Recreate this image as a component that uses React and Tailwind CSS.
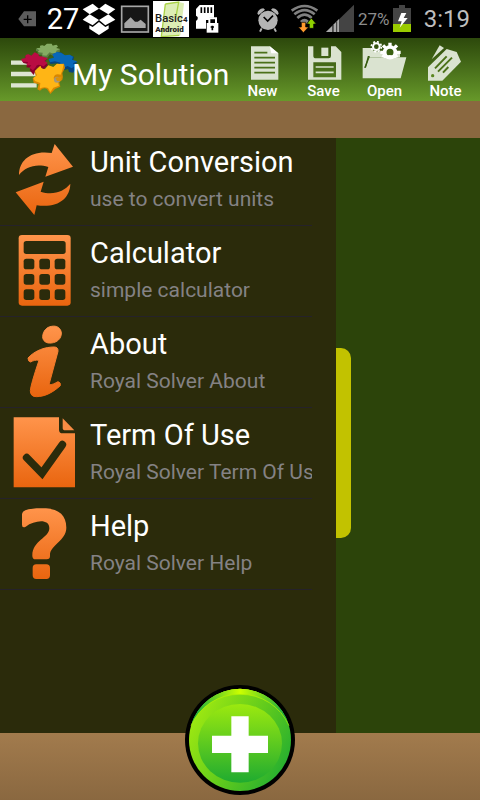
import React from "react";

function StatusBar() {
  return (
    <div className="flex h-[38px] items-center justify-between bg-black pl-[9px] pr-[10px]">
      <div className="flex items-center">
        <svg className="h-9 w-9" viewBox="27 3 108 108" aria-hidden="true">
          <path d="M72 34H108V79H72L55 57Z" fill="#5c5c5c" />
          <path d="M83 46V70M71 58H95" stroke="#000" strokeWidth="4" />
        </svg>
        <span className="w-9 text-center text-[29px] leading-9 text-white">27</span>
        <svg className="h-9 w-9" viewBox="243 3 108 108" aria-hidden="true" fill="#fff">
          <path d="M248 28L278 11L297 26L269 43Z" />
          <path d="M346 28L316 11L297 26L325 43Z" />
          <path d="M248 59L269 43L297 60L278 76Z" />
          <path d="M346 59L325 43L297 60L316 76Z" />
          <path d="M268 76L278 81L297 66L316 81L326 76V86L297 105L268 86Z" />
        </svg>
        <svg className="h-9 w-9" viewBox="351 3 108 108" aria-hidden="true">
          <rect x="365" y="19" width="80" height="77" fill="#161616" stroke="#a6a6a6" strokeWidth="5" />
          <path d="M373 84V70L392 52L405 65H413L422 59L437 72V84Z" fill="#a6a6a6" />
        </svg>
        <svg className="h-9 w-9" viewBox="459 3 108 108" aria-hidden="true">
          <rect x="459" y="3" width="108" height="108" fill="#fff" />
          <path d="M496 12L536 6L552 10L541 106L484 110Z" fill="#dcedb4" />
          <path d="M496 12L536 6L528 50M496 12L484 110L538 106" fill="none" stroke="#a9d245" strokeWidth="4" />
          <text x="465" y="66" fontFamily="Roboto, sans-serif" fontSize="34" fontWeight="500" fill="#1c1c1c">
            Basic
            <tspan fontSize="24" fontWeight="700">4</tspan>
          </text>
          <text x="466" y="96" fontFamily="Roboto, sans-serif" fontSize="24" fontWeight="900" fill="#1c1c1c">
            Android
          </text>
        </svg>
        <svg className="h-9 w-9" viewBox="567 3 108 108" aria-hidden="true">
          <path d="M599 15H642V53H628V60H618V86H588V63L593 58V51L588 47V27Z" fill="#fff" />
          <path d="M604 22V39M614 22V39M624 22V39M634 22V39" stroke="#000" strokeWidth="5" />
          <path d="M628 70V55H648V70" fill="none" stroke="#fff" strokeWidth="6" />
          <rect x="620" y="69" width="35" height="29" fill="#fff" />
          <path d="M637 77V91M632 81H642" stroke="#000" strokeWidth="5" />
        </svg>
      </div>
      <div className="flex items-center">
        <svg className="h-9 w-9" viewBox="30 3 108 108" aria-hidden="true">
          <circle cx="84" cy="61" r="29" fill="#b4b4b4" />
          <path d="M52 41Q54 27 70 25L75 29L56 45ZM116 41Q114 27 98 25L93 29L112 45Z" fill="#b4b4b4" />
          <path d="M65 85L60 95M103 85L108 95" stroke="#b4b4b4" strokeWidth="6" />
          <path d="M71 51L83 63L99 47" fill="none" stroke="#000" strokeWidth="5" />
        </svg>
        <svg className="h-9 w-9" viewBox="138 3 108 108" aria-hidden="true">
          <g fill="none" stroke="#808080" strokeWidth="8">
            <path d="M155 32Q194 4 232 32" />
            <path d="M163 43Q194 18 224 43" />
            <path d="M172 54Q194 34 215 54" />
          </g>
          <path d="M180 63Q194 49 207 63L194 77Z" fill="#808080" />
          <path d="M184 67H197V81H206L190 98L175 81H184Z" fill="#ff9a2e" stroke="#000" strokeWidth="2" />
          <path d="M208 85V72H200L214 54L229 72H221V85Z" fill="#8fd000" stroke="#000" strokeWidth="2" />
        </svg>
        <svg className="h-9 w-9" viewBox="246 3 108 108" aria-hidden="true">
          <path d="M258 96L342 14V96Z" fill="#444" />
          <path d="M258 96L277 77V96ZM280 96V74L297 57V96Z" fill="#a8a8a8" />
          <path d="M279 96V75M290 96V64" stroke="#333" strokeWidth="3" />
        </svg>
        <span className="w-[30px] text-center text-[17px] leading-9 text-[#8c8c8c]">27%</span>
        <svg className="h-9 w-7" viewBox="444 3 84 108" aria-hidden="true">
          <path d="M459 24H477V15H495V24H513V96H459Z" fill="#444" />
          <rect x="459" y="72" width="54" height="24" fill="#9acb00" />
          <path d="M484 39H499L491 54H503L479 83L485 64H474Z" fill="#fff" />
        </svg>
        <span className="w-[54px] text-right text-[24px] leading-9 text-[#bebebe]">3:19</span>
      </div>
    </div>
  );
}

const NewIcon = () => (
  <svg className="h-10 w-[46px]" viewBox="-2 123 138 120" aria-hidden="true">
    <path d="M31 139H88L113 160V239H31Z" fill="#dae3d0" />
    <path d="M87 139L113 160H92Z" fill="#fff" />
    <path d="M41 158H80M41 173H103M41 188H103M41 203H103M41 218H103" stroke="#4b7119" strokeWidth="5" />
  </svg>
);

const SaveIcon = () => (
  <svg className="h-10 w-[46px]" viewBox="181 123 138 120" aria-hidden="true">
    <path
      fillRule="evenodd"
      d="M202 139H218V168Q218 175 226 175H264Q271 175 271 168V139H285L302 156V239H202ZM218 187V232H286V187Z"
      fill="#dae3d0"
    />
    <rect x="242" y="143" width="21" height="25" fill="#dae3d0" />
    <path d="M225 201H279M225 217H279" stroke="#dae3d0" strokeWidth="5" />
  </svg>
);

const OpenIcon = () => (
  <svg className="h-10 w-[46px]" viewBox="364 123 138 120" aria-hidden="true">
    <path d="M366 235V144H390L400 153L478 158V171H384L370 203H375L387 172H497L480 235Z" fill="#dae3d0" />
    <path d="M387 170H383L374 203" fill="none" stroke="#355a10" strokeWidth="4" />
    <circle cx="407" cy="140" r="10" fill="none" stroke="#fff" strokeWidth="6" />
    <circle cx="407" cy="140" r="15" fill="none" stroke="#fff" strokeWidth="5" strokeDasharray="6 5.8" />
    <path d="M422 172A26 26 0 0 1 473 172Z" fill="#fff" />
    <circle cx="448" cy="157" r="16" fill="#3a6012" stroke="#fff" strokeWidth="11" />
    <path d="M426 174Q447 156 470 174Z" fill="#fff" />
    <path
      d="M448 138V128M434 143L427 136M462 143L469 136M429 157H419M467 157H480"
      stroke="#fff"
      strokeWidth="10"
    />
  </svg>
);

const NoteIcon = () => (
  <svg className="h-10 w-[46px]" viewBox="547 123 138 120" aria-hidden="true">
    <path d="M573 178L597 136L610 144Z" fill="#dae3d0" />
    <path d="M562 202L618 147L648 156L661 185L605 242H562Z" fill="#dae3d0" />
    <path d="M583 205L618 169M592 215L634 173M607 218L623 201" stroke="#4b7119" strokeWidth="6" />
    <circle cx="576" cy="227" r="5" fill="#5a8720" />
  </svg>
);

function Logo() {
  return (
    <svg className="h-[63px] w-[70px] shrink-0" viewBox="30 114 210 189" aria-hidden="true">
      <path d="M33 188H110M33 222H110M33 256H110" stroke="#dde5d2" strokeWidth="13" />
      <path
        d="M108 146L121 144Q117 137 127 137L133 138L141 132H155L158 138L169 135L174 140L168 145L180 148L179 156L168 158L172 165L158 167L150 163L142 173L127 172L125 164L110 164L117 156L108 153Z"
        fill="#5b7d42"
      />
      <path
        d="M109 145L121 143Q117 136 127 136L133 138L141 131H155L158 137L169 134L174 139L168 144L180 147L168 153L171 159L156 160L149 157L139 167L127 166L128 158L112 157L118 151Z"
        fill="#84ab62"
      />
      <path
        d="M64 179L77 175Q73 164 86 164L94 168L104 158L116 164Q114 171 124 170L141 176L134 187L144 194L132 207L121 203Q111 200 108 209L101 225L89 211L91 203L79 202L82 192L70 189Z"
        fill="#87002b"
      />
      <path
        d="M63 177L77 174Q73 163 86 163L94 167L104 157L116 163Q114 170 124 169L144 175L133 183L143 188L131 199L120 195Q109 192 107 202L99 211L88 203L94 196L79 196L84 186L68 185Z"
        fill="#b90c43"
      />
      <path
        d="M147 179L162 174L158 164L171 157L185 158L195 167L210 165L222 171L219 182L232 187L223 196L227 208L219 218L207 216L204 207L190 211L178 203L173 190L151 192Z"
        fill="#074480"
      />
      <path
        d="M146 177L162 173L157 163L171 156L183 158L195 166L209 164L219 170L216 179L232 184L219 190L224 198L215 205L203 198L190 203L177 196L182 188L165 184L150 187Z"
        fill="#0867b8"
      />
      <path
        d="M104 214L121 198Q125 211 136 207L145 197L160 202L171 192L192 191L195 204L187 219Q190 231 187 239L178 247L181 260L165 267L151 282L141 267Q131 261 120 272L112 268L116 253L101 248L98 235L107 229Z"
        fill="#d98700"
      />
      <path
        d="M105 213L121 197Q125 210 136 206L145 196L160 201L171 191L191 193L187 211L182 224Q164 219 161 233Q162 245 174 246L177 257L160 263L151 277L144 264Q130 258 119 266L121 249L105 243L100 234L111 226Z"
        fill="#ffb515"
      />
      <circle cx="171" cy="239" r="9" fill="#a4987d" />
      <path d="M166 233L185 230L181 243H171Z" fill="#de9207" />
    </svg>
  );
}

const actions = [
  { label: "New", Icon: NewIcon },
  { label: "Save", Icon: SaveIcon },
  { label: "Open", Icon: OpenIcon },
  { label: "Note", Icon: NoteIcon },
];

function Header() {
  return (
    <header className="flex h-[63px] bg-linear-to-b from-[#2d490c] to-[#67992a] pr-1">
      <button type="button" aria-label="Menu" className="ml-[10px] shrink-0">
        <Logo />
      </button>
      <h1 className="-ml-2 min-w-0 flex-1 pt-[5px] text-[30px] leading-[63px] whitespace-nowrap text-white">
        My Solution
      </h1>
      <nav className="flex shrink-0">
        {actions.map(({ label, Icon }) => (
          <button key={label} type="button" className="flex w-[61px] flex-col items-center pt-[3px] text-white">
            <Icon />
            <span className="text-[15px] leading-5 font-medium">{label}</span>
          </button>
        ))}
      </nav>
    </header>
  );
}

const OrangeFill = ({ id }) => (
  <defs>
    <linearGradient id={id} x1="0" y1="0" x2="0" y2="1">
      <stop offset="0" stopColor="#ff944b" />
      <stop offset="1" stopColor="#e9650f" />
    </linearGradient>
  </defs>
);

const ConvertIcon = () => (
  <svg className="size-[70px] shrink-0 overflow-visible" viewBox="30 21 210 210" aria-hidden="true">
    <defs>
      <linearGradient id="convert" gradientUnits="userSpaceOnUse" x1="0" y1="18" x2="0" y2="231">
        <stop offset="0" stopColor="#ff944b" />
        <stop offset="1" stopColor="#e9650f" />
      </linearGradient>
    </defs>
    <g fill="url(#convert)">
      <path d="M57 111C57 66 94 36 155 45L164 18L219 86L136 116L145 87C108 76 77 86 57 111Z" />
      <path d="M211 137C210 181 174 211 110 202L103 231L47 163L131 131L122 161C160 173 192 160 211 137Z" />
    </g>
  </svg>
);

const CalculatorIcon = () => (
  <svg className="size-[70px] shrink-0 overflow-visible" viewBox="30 294 210 210" aria-hidden="true">
    <OrangeFill id="calculator" />
    <rect x="56" y="291" width="156" height="212" rx="10" fill="url(#calculator)" />
    <g fill="#2b2b0b">
      <rect x="71" y="309" width="126" height="39" rx="8" />
      {[362, 408, 454].map((y) =>
        [71, 118, 164].map((x) => <rect key={`${x}-${y}`} x={x} y={y} width="32" height="32" rx="8" />)
      )}
    </g>
  </svg>
);

const InfoIcon = () => (
  <svg className="size-[70px] shrink-0 overflow-visible" viewBox="30 36 210 210" aria-hidden="true">
    <OrangeFill id="info" />
    <path
      fill="url(#info)"
      stroke="url(#info)"
      strokeWidth="3"
      d="M155 34C170 31 183 39 184 54C184 71 172 82 154 84C138 86 128 77 128 65C129 48 140 36 155 34ZM84 129C106 105 137 96 162 96Q175 96 174 109L147 209C155 211 166 204 174 200Q183 202 181 212C160 231 136 245 109 245Q91 245 91 227Q92 210 117 136C108 134 98 137 92 141Q84 140 84 129Z"
    />
  </svg>
);

const TermsIcon = () => (
  <svg className="size-[70px] shrink-0 overflow-visible" viewBox="30 309 210 210" aria-hidden="true">
    <OrangeFill id="terms" />
    <path d="M41 307H177V344Q177 355 188 355H225V517H41Z" fill="url(#terms)" />
    <path d="M188 310L223 346H196Q188 346 188 338Z" fill="#f88c44" />
    <path d="M80 428L126 475L187 389" fill="none" stroke="#2b2b0b" strokeWidth="23" strokeLinecap="round" />
  </svg>
);

const HelpIcon = () => (
  <svg className="size-[70px] shrink-0 overflow-visible" viewBox="30 57 210 210" aria-hidden="true">
    <OrangeFill id="help" />
    <path
      fill="url(#help)"
      d="M66 72Q67 65 76 61C92 54 118 54 138 55C178 58 199 77 199 113C199 152 150 165 150 195V198Q150 208 140 208H107Q97 208 97 197C97 151 148 144 148 115C148 85 104 91 77 110Q66 115 66 104ZM98 234Q98 223 109 223H139Q150 223 150 234V256Q150 267 139 267H109Q98 267 98 256Z"
    />
  </svg>
);

const entries = [
  { title: "Unit Conversion", detail: "use to convert units", Icon: ConvertIcon },
  { title: "Calculator", detail: "simple calculator", Icon: CalculatorIcon },
  { title: "About", detail: "Royal Solver About", Icon: InfoIcon },
  { title: "Term Of Use", detail: "Royal Solver Term Of Use", Icon: TermsIcon },
  { title: "Help", detail: "Royal Solver Help", Icon: HelpIcon },
];

function Drawer() {
  return (
    <aside className="w-[70%] bg-[#2b2b0b] pr-6">
      <ul>
        {entries.map(({ title, detail, Icon }) => (
          <li key={title} className="h-[91px] border-b border-[#25222a] first:h-[88px]">
            <button type="button" className="flex h-full w-full items-end gap-[10px] pb-[10px] pl-[10px] text-left">
              <Icon />
              <span className="block min-w-0 flex-1 overflow-hidden whitespace-nowrap">
                <span className="block text-[29px] leading-[42px] text-white">{title}</span>
                <span className="block text-[21px] leading-8 text-[#848284]">{detail}</span>
              </span>
            </button>
          </li>
        ))}
      </ul>
    </aside>
  );
}

function AddIcon() {
  return (
    <svg className="size-[110px]" viewBox="45 44 330 330" aria-hidden="true">
      <defs>
        <linearGradient id="rim" x1="0" y1="0.2" x2="1" y2="0.8">
          <stop offset="0" stopColor="#a5ec10" />
          <stop offset="0.5" stopColor="#66cd1b" />
          <stop offset="1" stopColor="#1fac32" />
        </linearGradient>
        <linearGradient id="face" x1="0" y1="0" x2="0" y2="1">
          <stop offset="0" stopColor="#9ce90f" />
          <stop offset="1" stopColor="#1fab30" />
        </linearGradient>
        <linearGradient id="shine" x1="0" y1="0" x2="1" y2="0">
          <stop offset="0" stopColor="#0da544" />
          <stop offset="0.5" stopColor="#ccff00" />
          <stop offset="1" stopColor="#0da544" />
        </linearGradient>
      </defs>
      <circle cx="210" cy="209" r="165" fill="#000" />
      <circle cx="210" cy="209" r="153" fill="url(#rim)" />
      <path d="M63 166A153 153 0 0 1 357 166A155 155 0 0 0 63 166Z" fill="url(#shine)" />
      <path d="M63 166A153 153 0 0 1 357 166A158 158 0 0 0 210 72A158 158 0 0 0 63 166Z" fill="url(#shine)" />
      <path d="M63 166A158 158 0 0 1 210 72A158 158 0 0 1 357 166" fill="none" stroke="#baf500" strokeWidth="2" />
      <ellipse cx="210" cy="219" rx="126" ry="118" fill="url(#face)" />
      <path d="M184 138H236V196H294V248H236V306H184V248H126V196H184Z" fill="#fff" />
    </svg>
  );
}

export default function App() {
  return (
    <div className="flex min-h-screen flex-col font-[Roboto,sans-serif]">
      <StatusBar />
      <Header />
      <div className="h-[37px] bg-[#8a6840]" />
      <main className="flex flex-1 bg-[#2c440a]">
        <Drawer />
        <div className="flex flex-1 items-center pt-[15px]">
          <button type="button" aria-label="Drawer handle" className="h-[190px] w-[15px] rounded-r-[10px] bg-[#c2c200]" />
        </div>
      </main>
      <footer className="relative flex h-[67px] justify-center bg-linear-to-b from-[#a27b4d] to-[#8a6840]">
        <button type="button" aria-label="Add" className="absolute bottom-[5px] rounded-full">
          <AddIcon />
        </button>
      </footer>
    </div>
  );
}
